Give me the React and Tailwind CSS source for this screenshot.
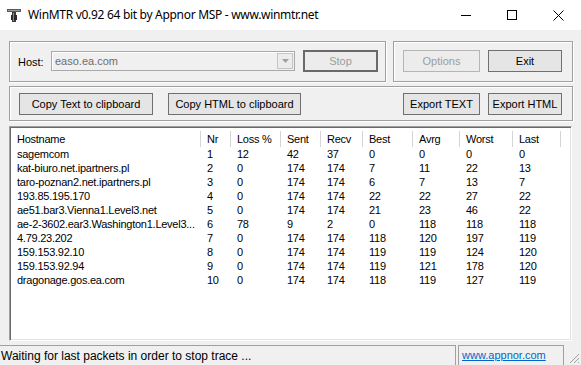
import React from 'react'

const font = { fontFamily: '"Liberation Sans", Arial, sans-serif' }

const cols = [
  ['Hostname', 190],
  ['Nr', 30],
  ['Loss %', 50],
  ['Sent', 40],
  ['Recv', 42],
  ['Best', 50],
  ['Avrg', 47],
  ['Worst', 53],
  ['Last', 48],
]

const rows = [
  ['sagemcom', 1, 12, 42, 37, 0, 0, 0, 0],
  ['kat-biuro.net.ipartners.pl', 2, 0, 174, 174, 7, 11, 22, 13],
  ['taro-poznan2.net.ipartners.pl', 3, 0, 174, 174, 6, 7, 13, 7],
  ['193.85.195.170', 4, 0, 174, 174, 22, 22, 27, 22],
  ['ae51.bar3.Vienna1.Level3.net', 5, 0, 174, 174, 21, 23, 46, 22],
  ['ae-2-3602.ear3.Washington1.Level3...', 6, 78, 9, 2, 0, 118, 118, 118],
  ['4.79.23.202', 7, 0, 174, 174, 118, 120, 197, 119],
  ['159.153.92.10', 8, 0, 174, 174, 119, 119, 124, 120],
  ['159.153.92.94', 9, 0, 174, 174, 119, 121, 178, 120],
  ['dragonage.gos.ea.com', 10, 0, 174, 174, 118, 119, 127, 119],
]

const group = 'border border-[#a0a0a0] shadow-[inset_1px_1px_0_#fff,1px_1px_0_#fff]'
const btn = 'flex h-[22px] shrink-0 items-center justify-center border text-[11px]'
const btnOn = `${btn} border-[#707070] bg-[#e5e5e5] text-black`
const btnOff = `${btn} border-[#b5b5b5] bg-[#ececec] text-[#9d9d9d]`

function AppIcon() {
  return (
    <svg width="14" height="13" viewBox="0 0 14 13">
      <rect x="0" y="0" width="14" height="3" fill="#5a5a5a" />
      <rect x="1" y="1" width="12" height="1" fill="#9a9a9a" />
      <rect x="5" y="3" width="4" height="10" fill="#3c3c3c" />
      <rect x="4" y="6" width="6" height="5" fill="#2a2a2a" />
      <rect x="6" y="4" width="1" height="8" fill="#8a8a8a" />
    </svg>
  )
}

function TitleBar() {
  return (
    <div className="flex h-[30px] items-center bg-white">
      <div className="ml-[7px] mr-[7px] flex items-center"><AppIcon /></div>
      <span className="text-[12px] tracking-[-0.3px] text-black" style={{ fontFamily: '"Noto Sans", "Liberation Sans", sans-serif' }}>
        WinMTR v0.92 64 bit by Appnor MSP - www.winmtr.net
      </span>
      <div className="ml-auto flex h-full">
        <div className="flex w-[46px] items-center justify-center">
          <div className="h-px w-[10px] bg-black" />
        </div>
        <div className="flex w-[46px] items-center justify-center">
          <div className="h-[10px] w-[10px] border border-black" />
        </div>
        <div className="flex w-[46px] items-center justify-center">
          <svg width="11" height="11" viewBox="0 0 11 11">
            <path d="M0.5 0.5 L10.5 10.5 M10.5 0.5 L0.5 10.5" stroke="#000" strokeWidth="1" />
          </svg>
        </div>
      </div>
    </div>
  )
}

function HostCombo() {
  return (
    <div className="flex h-[20px] w-[244px] items-center border border-[#a9a9a9] bg-[#f0f0f0] shadow-[inset_1px_1px_0_#fff]">
      <span className="flex-1 pl-[3px] text-[11px] text-[#6d6d6d]">easo.ea.com</span>
      <div className="mr-px flex h-[16px] w-[16px] items-center justify-center border border-[#c5c5c5] bg-[#ececec]">
        <svg width="7" height="4" viewBox="0 0 7 4"><path d="M0 0 H7 L3.5 4 Z" fill="#a0a0a0" /></svg>
      </div>
    </div>
  )
}

function Controls() {
  return (
    <>
      <div className="mt-[11px] flex gap-[7px]">
        <div className={`${group} flex h-[41px] w-[377px] items-start pt-[8px]`}>
          <span className="w-[41px] shrink-0 pl-[8px] pt-[4px] text-[11px] text-black">Host:</span>
          <div className="pt-px"><HostCombo /></div>
          <div className={`${btn} ml-[8px] w-[75px] border-2 border-[#6a6a6a] bg-[#ececec] text-[#9d9d9d]`}>Stop</div>
        </div>
        <div className={`${group} flex h-[41px] w-[180px] items-start gap-[8px] pl-[9px] pt-[8px]`}>
          <div className={`${btnOff} w-[77px]`}>Options</div>
          <div className={`${btnOn} w-[74px]`}>Exit</div>
        </div>
      </div>
      <div className={`${group} mt-[4px] flex h-[35px] w-[564px] items-start pl-[9px] pt-[6px]`}>
        <div className={`${btnOn} w-[134px]`}>Copy Text to clipboard</div>
        <div className={`${btnOn} ml-[15px] w-[133px]`}>Copy HTML to clipboard</div>
        <div className={`${btnOn} ml-auto w-[77px]`}>Export TEXT</div>
        <div className={`${btnOn} ml-[8px] mr-[10px] w-[74px]`}>Export HTML</div>
      </div>
    </>
  )
}

function List() {
  return (
    <div className="mt-[5px] h-[215px] w-[563px] overflow-hidden border border-b-white border-l-[#a0a0a0] border-r-white border-t-[#a0a0a0] bg-white shadow-[inset_1px_1px_0_#696969,inset_-1px_-1px_0_#e3e3e3]">
      <div className="flex h-[20px] items-center pl-px pt-[4px]">
        {cols.map(([label, w]) => (
          <div key={label} className="h-full shrink-0 border-r border-[#d5d5d5] pl-[6px] text-[11px] leading-[16px] tracking-[-0.25px] text-black" style={{ width: w }}>
            {label}
          </div>
        ))}
        <div className="h-full w-[11px] shrink-0 border-r border-[#d5d5d5]" />
      </div>
      <div className="pl-px">
        {rows.map((r) => (
          <div key={r[1]} className="flex h-[14px] items-center">
            {r.map((v, i) => (
              <div key={i} className="shrink-0 overflow-hidden whitespace-nowrap pl-[6px] text-[11px] leading-[14px] tracking-[-0.25px] text-black" style={{ width: cols[i][1] }}>
                {v}
              </div>
            ))}
          </div>
        ))}
      </div>
    </div>
  )
}

function StatusBar() {
  return (
    <div className="mt-auto flex h-[20px] items-stretch">
      <div className="flex w-[456px] items-center border-r border-t border-[#a0a0a0] pl-px text-[12px] text-black">
        Waiting for last packets in order to stop trace ...
      </div>
      <div className="ml-[2px] flex w-[106px] items-center border-l border-r border-t border-[#a0a0a0] pl-[3px]">
        <span className="text-[11px] text-[#0066cc] underline">www.appnor.com</span>
      </div>
      <div className="flex flex-1 items-end justify-end pb-px pr-px">
        <svg width="12" height="12" viewBox="0 0 12 12">
          <path d="M11 2 L2 11 M11 6 L6 11 M11 10 L10 11" stroke="#a0a0a0" strokeWidth="1" />
        </svg>
      </div>
    </div>
  )
}

export default function App() {
  return (
    <div className="flex h-[365px] w-[581px] flex-col overflow-hidden bg-[#f0f0f0]" style={font}>
      <TitleBar />
      <div className="pl-[9px]">
        <Controls />
        <List />
      </div>
      <StatusBar />
    </div>
  )
}
